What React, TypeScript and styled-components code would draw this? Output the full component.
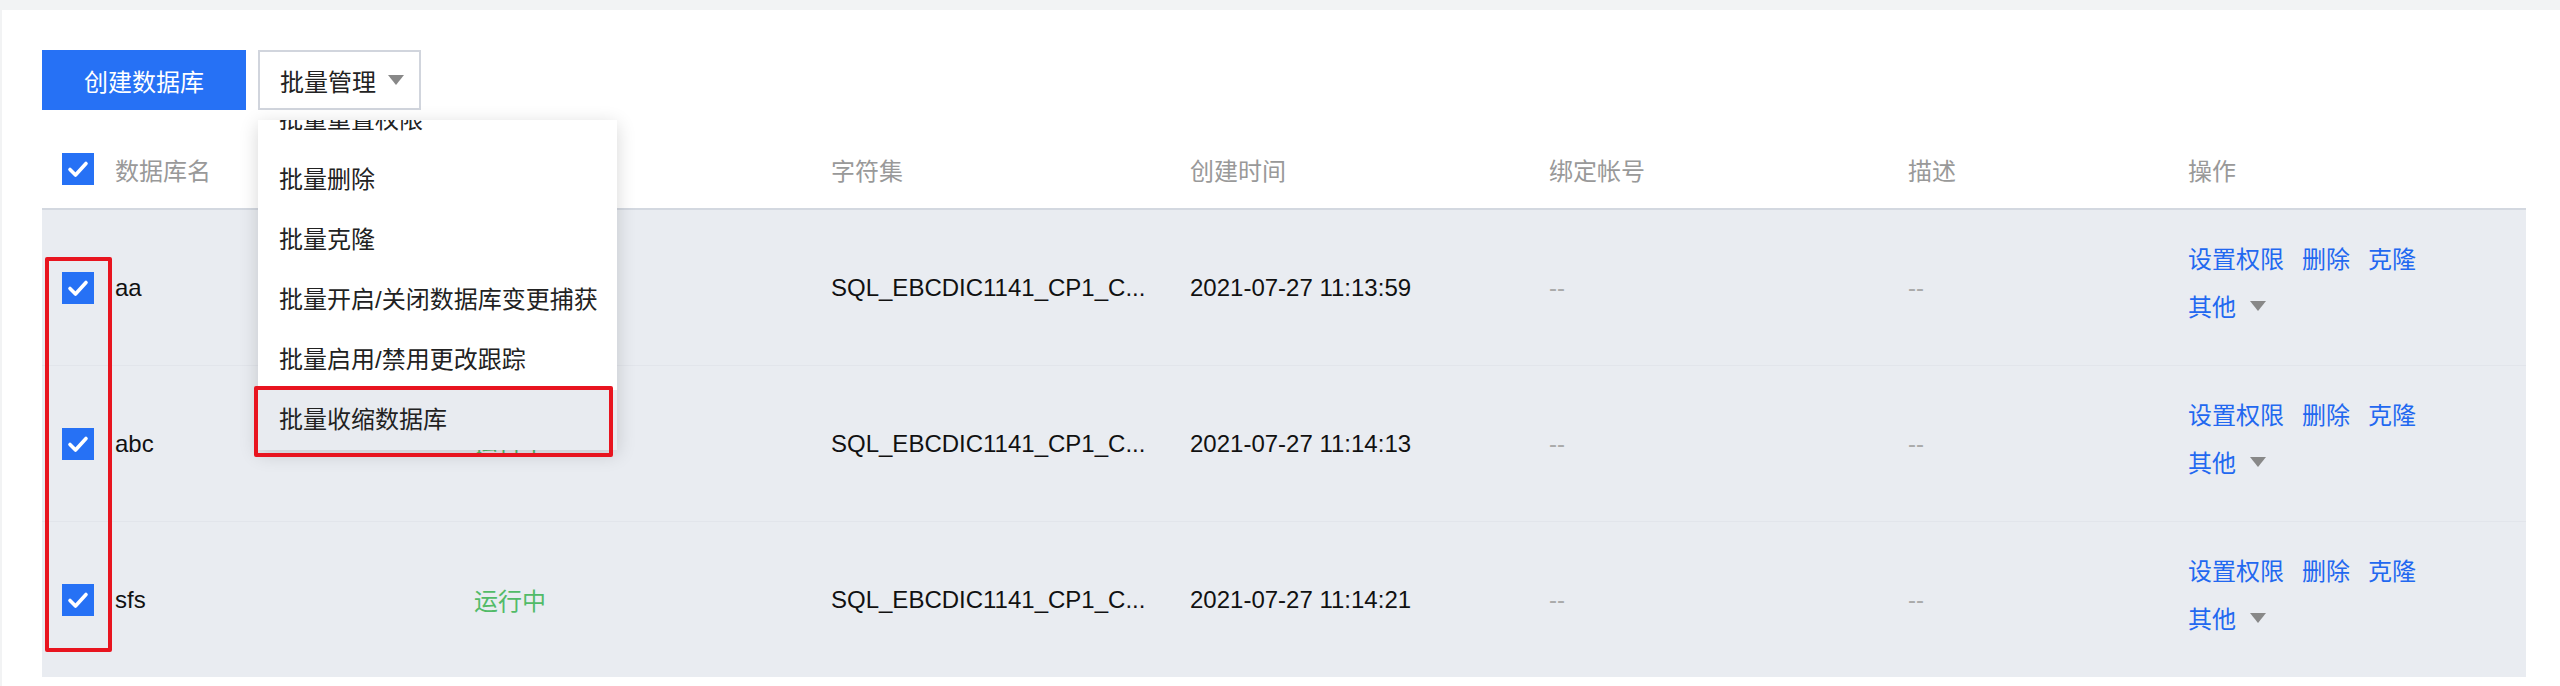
import React from "react";
import styled, { createGlobalStyle } from "styled-components";

const GlobalStyle = createGlobalStyle`
  html, body {
    margin: 0;
    padding: 0;
    background: #f2f3f4;
  }
  * { box-sizing: border-box; }
  body {
    font-family: "Liberation Sans", "Noto Sans CJK SC", sans-serif;
    font-size: 24px;
    color: #222;
  }
`;

const Page = styled.div`
  padding: 10px 0 0 2px;
  min-height: 686px;
`;

const Panel = styled.div`
  position: relative;
  background: #fff;
  min-height: 676px;
  padding: 40px 34px 10px 40px;
`;

const Toolbar = styled.div`
  display: flex;
  gap: 12px;
  height: 60px;
`;

const PrimaryButton = styled.button`
  width: 204px;
  height: 60px;
  border: none;
  background: #2671f5;
  color: #fff;
  font-family: inherit;
  font-size: 24px;
  padding: 0;
  cursor: pointer;
`;

const DropdownWrap = styled.div`
  position: relative;
  z-index: 5;
`;

const OutlineButton = styled.button`
  height: 60px;
  width: 163px;
  border: 2px solid #d1d5dd;
  background: #fff;
  color: #222;
  font-family: inherit;
  font-size: 24px;
  display: flex;
  align-items: center;
  gap: 12px;
  padding: 0 0 0 20px;
  cursor: pointer;
`;

const Caret = styled.span<{ $w?: number }>`
  display: inline-block;
  width: 0;
  height: 0;
  border-left: ${(p) => (p.$w ?? 16) / 2}px solid transparent;
  border-right: ${(p) => (p.$w ?? 16) / 2}px solid transparent;
  border-top: 10px solid #888;
`;

const Menu = styled.div`
  position: absolute;
  left: 0;
  top: 70px;
  width: 359px;
  height: 330px;
  background: #fff;
  overflow: hidden;
  box-shadow: 0 4px 18px rgba(0, 0, 0, 0.16);
`;

const MenuList = styled.ul`
  list-style: none;
  margin: -30px 0 0 0;
  padding: 0;
`;

const MenuItem = styled.li<{ $active?: boolean }>`
  height: 60px;
  line-height: 60px;
  padding-left: 21px;
  font-size: 24px;
  color: #222;
  white-space: nowrap;
  background: ${(p) => (p.$active ? "#e8ebf0" : "#fff")};
`;

const RedBox = styled.div<{ $l: number; $t: number; $w: number; $h: number }>`
  position: absolute;
  left: ${(p) => p.$l}px;
  top: ${(p) => p.$t}px;
  width: ${(p) => p.$w}px;
  height: ${(p) => p.$h}px;
  border: 4px solid #e8141f;
  border-radius: 2px;
  pointer-events: none;
  z-index: 10;
`;

const Table = styled.div`
  margin-top: 20px;
`;

const cols = "412px 357px 359px 359px 359px 280px 1fr";

const HeadRow = styled.div`
  display: grid;
  grid-template-columns: ${cols};
  height: 80px;
  border-bottom: 2px solid #d3d8e0;
  align-items: center;
  background: #fff;
`;

const HeadCell = styled.div`
  padding-left: 20px;
  color: #999;
  font-size: 24px;
  display: flex;
  align-items: center;
  gap: 21px;
`;

const BodyRow = styled.div<{ $last?: boolean }>`
  display: grid;
  grid-template-columns: ${cols};
  height: ${(p) => (p.$last ? 155 : 156)}px;
  align-items: center;
  background: #e9ecf1;
  border-bottom: ${(p) => (p.$last ? "none" : "1px solid #e2e5eb")};
`;

const Cell = styled.div<{ $tone?: "muted" | "ok" }>`
  padding-left: 20px;
  font-size: 24px;
  white-space: nowrap;
  overflow: hidden;
  color: ${(p) => (p.$tone === "muted" ? "#aaa" : p.$tone === "ok" ? "#52bb68" : "#111")};
  display: flex;
  align-items: center;
  gap: 21px;
`;

const ActionCell = styled.div`
  padding-left: 20px;
  padding-bottom: 12px;
  display: flex;
  flex-direction: column;
`;

const ActionLine = styled.div`
  display: flex;
  align-items: center;
  height: 48px;
  gap: 18px;
`;

const Link = styled.a`
  color: #2268f0;
  font-size: 24px;
  text-decoration: none;
  cursor: pointer;
`;

const MoreLink = styled.span`
  display: inline-flex;
  align-items: center;
  gap: 14px;
  color: #2268f0;
`;

const Box = styled.span`
  width: 32px;
  height: 32px;
  background: #2671f5;
  display: inline-flex;
  align-items: center;
  justify-content: center;
  flex: none;
`;

const Check = () => (
  <Box>
    <svg width="24" height="24" viewBox="0 0 24 24">
      <path d="M4 12.5 L9.5 18 L20 6.5" fill="none" stroke="#fff" strokeWidth="3.6" strokeLinecap="round" strokeLinejoin="round" />
    </svg>
  </Box>
);

const rows = [
  { name: "aa", time: "2021-07-27 11:13:59" },
  { name: "abc", time: "2021-07-27 11:14:13" },
  { name: "sfs", time: "2021-07-27 11:14:21" },
];

const menuItems = [
  "批量重置权限",
  "批量删除",
  "批量克隆",
  "批量开启/关闭数据库变更捕获",
  "批量启用/禁用更改跟踪",
  "批量收缩数据库",
];

export default function App() {
  return (
    <>
      <GlobalStyle />
      <Page>
        <Panel>
          <Toolbar>
            <PrimaryButton>创建数据库</PrimaryButton>
            <DropdownWrap>
              <OutlineButton>
                批量管理
                <Caret />
              </OutlineButton>
              <Menu>
                <MenuList>
                  {menuItems.map((m, i) => (
                    <MenuItem key={m} $active={i === menuItems.length - 1}>
                      {m}
                    </MenuItem>
                  ))}
                </MenuList>
              </Menu>
              <RedBox $l={-4} $t={336} $w={359} $h={71} />
            </DropdownWrap>
          </Toolbar>

          <Table>
            <HeadRow>
              <HeadCell>
                <Check />
                数据库名
              </HeadCell>
              <HeadCell>状态</HeadCell>
              <HeadCell>字符集</HeadCell>
              <HeadCell>创建时间</HeadCell>
              <HeadCell>绑定帐号</HeadCell>
              <HeadCell>描述</HeadCell>
              <HeadCell>操作</HeadCell>
            </HeadRow>
            {rows.map((r, i) => (
              <BodyRow key={r.name} $last={i === rows.length - 1}>
                <Cell>
                  <Check />
                  {r.name}
                </Cell>
                <Cell $tone="ok">运行中</Cell>
                <Cell>SQL_EBCDIC1141_CP1_C...</Cell>
                <Cell>{r.time}</Cell>
                <Cell $tone="muted">--</Cell>
                <Cell $tone="muted">--</Cell>
                <ActionCell>
                  <ActionLine>
                    <Link>设置权限</Link>
                    <Link>删除</Link>
                    <Link>克隆</Link>
                  </ActionLine>
                  <ActionLine>
                    <MoreLink>
                      其他
                      <Caret />
                    </MoreLink>
                  </ActionLine>
                </ActionCell>
              </BodyRow>
            ))}
          </Table>

          <RedBox $l={43} $t={247} $w={67} $h={395} />
        </Panel>
      </Page>
    </>
  );
}
